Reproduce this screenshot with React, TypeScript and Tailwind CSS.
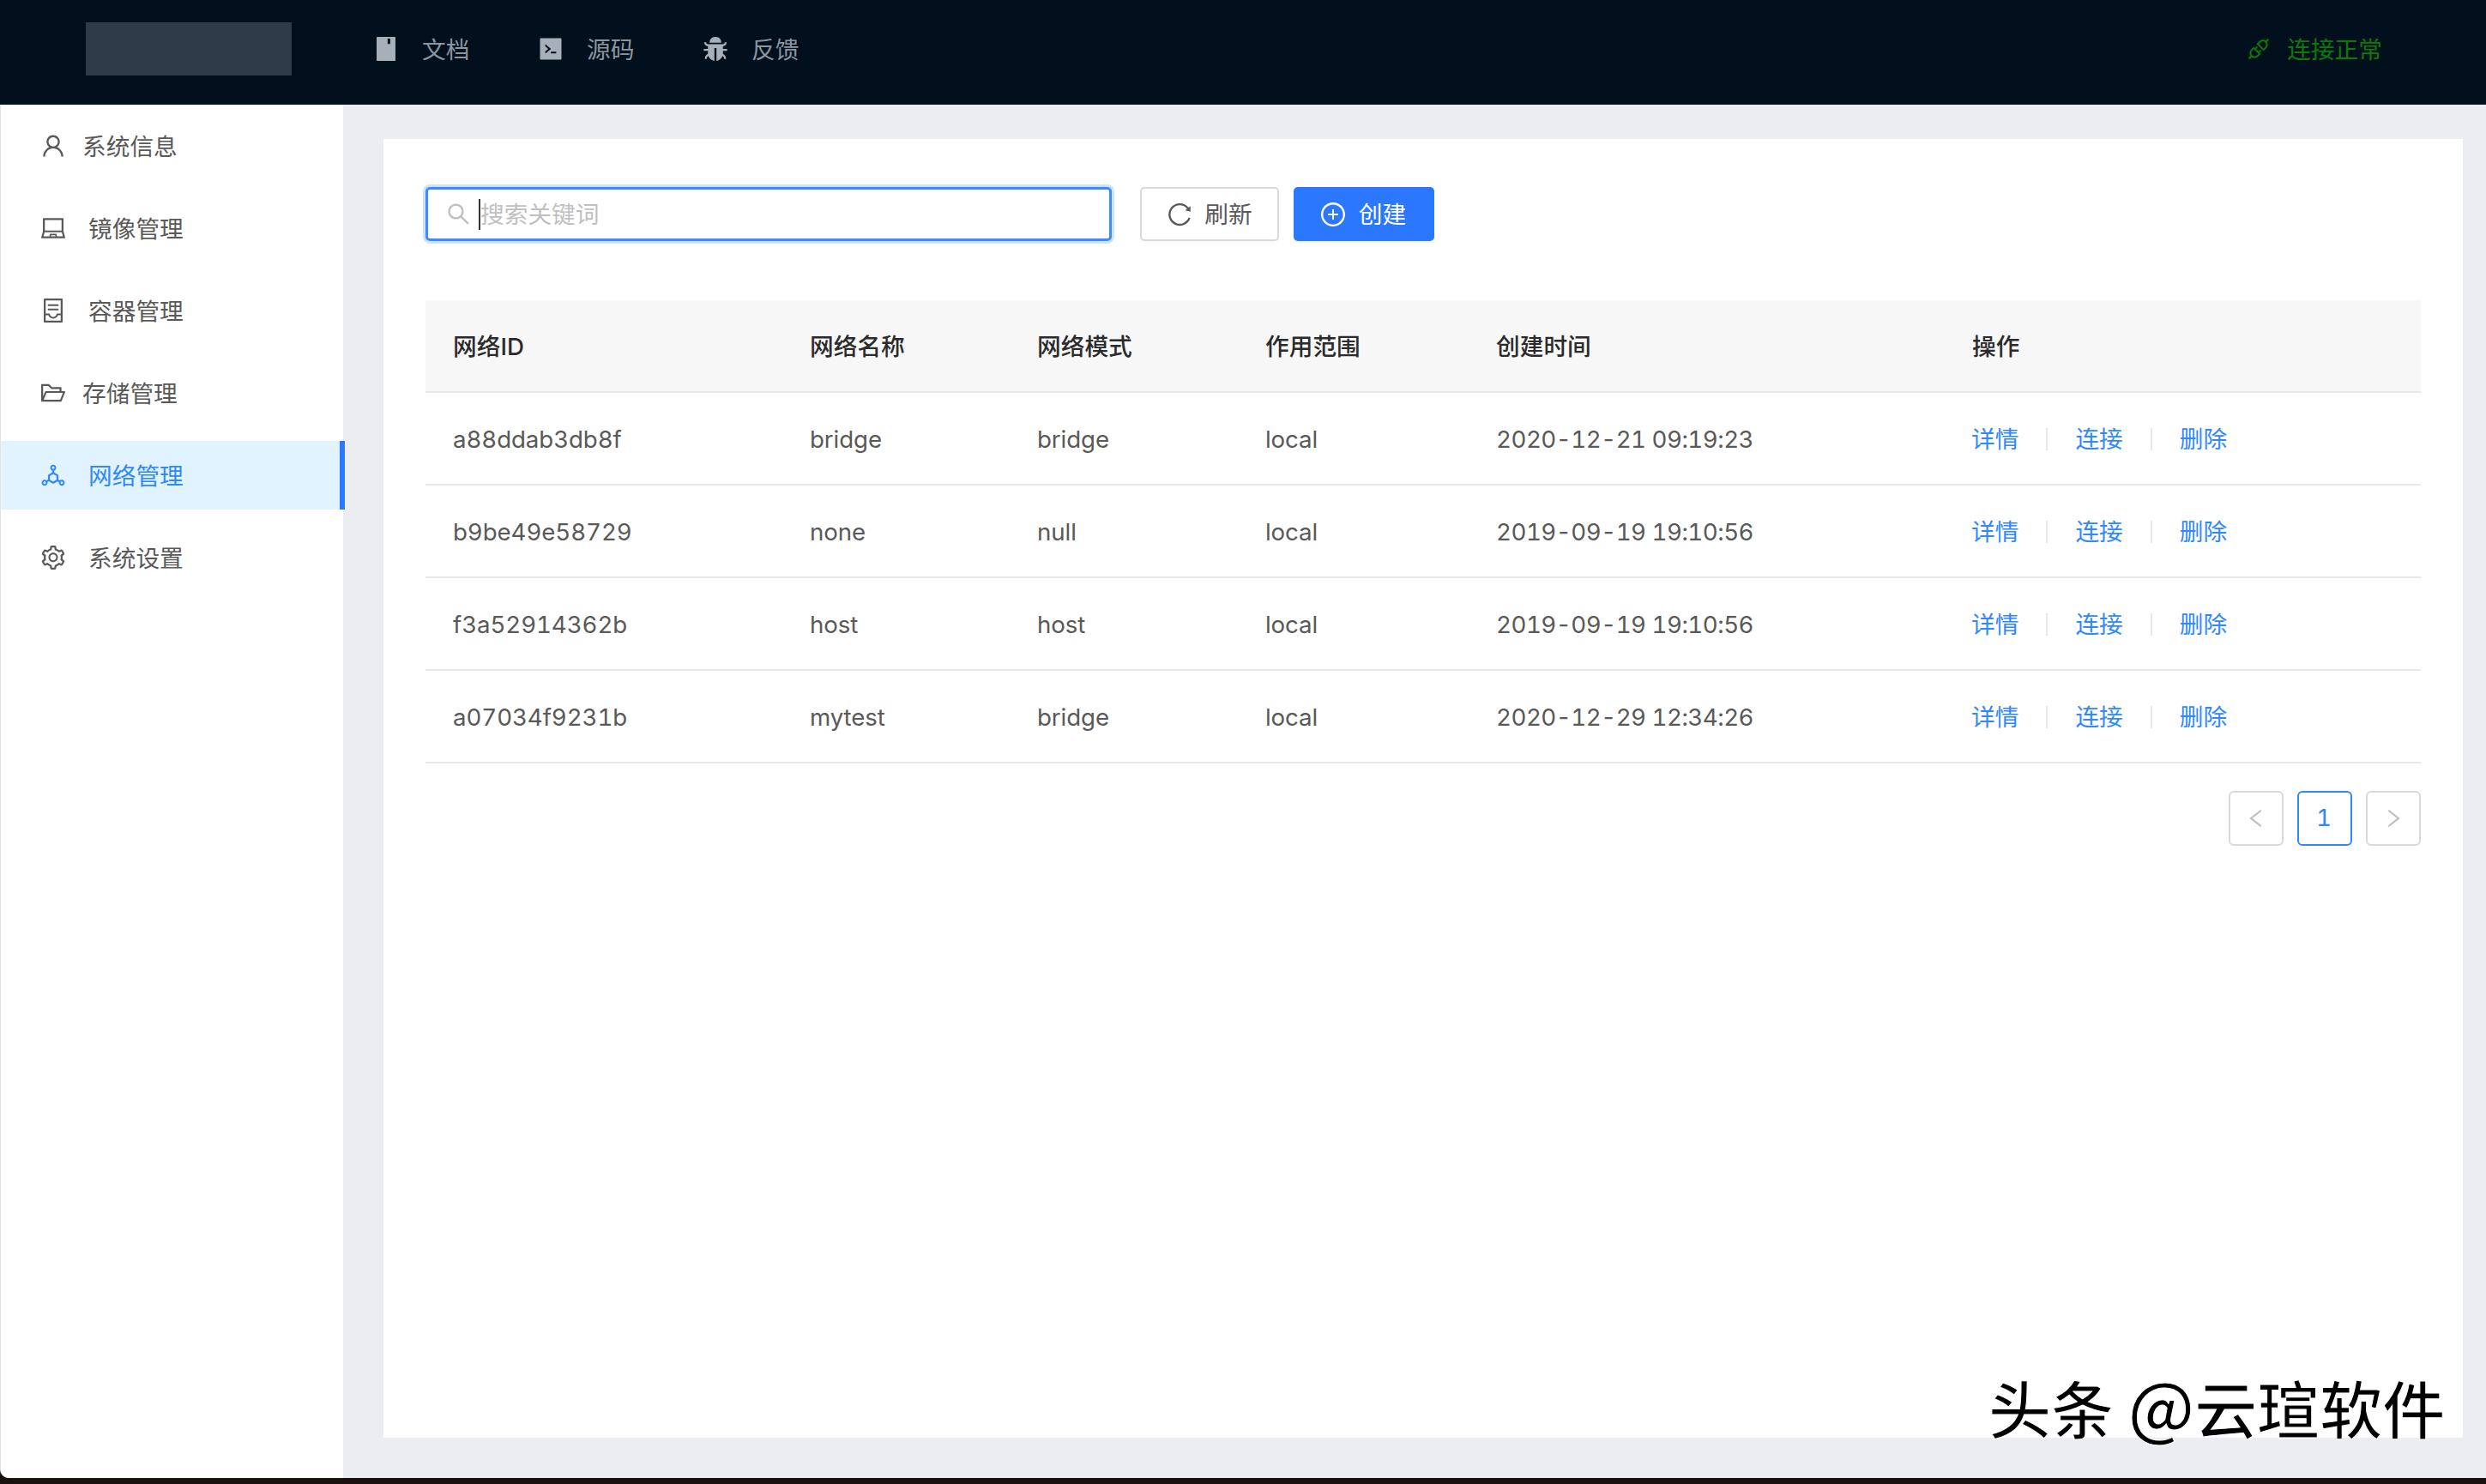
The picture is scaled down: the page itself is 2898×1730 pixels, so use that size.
import React from "react";
import {
  AiFillBook, AiFillBug, AiFillCode, AiOutlineApi, AiOutlineContainer, AiOutlineDeploymentUnit,
  AiOutlineFolderOpen, AiOutlineLaptop, AiOutlineLeft, AiOutlinePlusCircle, AiOutlineReload,
  AiOutlineRight, AiOutlineSearch, AiOutlineSetting, AiOutlineUser,
} from "react-icons/ai";

const nav = [
  { icon: AiFillBook, label: "文档" },
  { icon: AiFillCode, label: "源码" },
  { icon: AiFillBug, label: "反馈" },
];

const menu = [
  { icon: AiOutlineUser, label: "系统信息", gap: "gap-[18px]", active: false },
  { icon: AiOutlineLaptop, label: "镜像管理", gap: "gap-[25px]", active: false },
  { icon: AiOutlineContainer, label: "容器管理", gap: "gap-[25px]", active: false },
  { icon: AiOutlineFolderOpen, label: "存储管理", gap: "gap-[18px]", active: false },
  { icon: AiOutlineDeploymentUnit, label: "网络管理", gap: "gap-[25px]", active: true },
  { icon: AiOutlineSetting, label: "系统设置", gap: "gap-[25px]", active: false },
];

const rows = [
  ["a88ddab3db8f", "bridge", "bridge", "local", "2020-12-21 09:19:23"],
  ["b9be49e58729", "none", "null", "local", "2019-09-19 19:10:56"],
  ["f3a52914362b", "host", "host", "local", "2019-09-19 19:10:56"],
  ["a07034f9231b", "mytest", "bridge", "local", "2020-12-29 12:34:26"],
];

const heads = ["网络ID", "网络名称", "网络模式", "作用范围", "创建时间", "操作"];

export default function App() {
  return (
    <div className="relative flex h-[1730px] w-[2898px] flex-col overflow-hidden bg-[#1a1210] font-['Inter','Noto_Sans_CJK_SC',sans-serif] text-[27.7px] tabular-nums">
      <header className="flex h-[122px] shrink-0 items-center bg-[#02101e] pb-[8px]">
        <div className="ml-[100px] h-[62px] w-[240px] bg-[#2e3b48]" />
        <nav className="ml-[94px] flex items-center gap-[79px] text-[#8b96a1]">
          {nav.map((n) => (
            <div key={n.label} className="flex items-center gap-[26px]">
              <n.icon className="h-[32px] w-[32px] text-[#a7b0b9]" />
              <span className="w-[55px] whitespace-nowrap pt-[3px]">{n.label}</span>
            </div>
          ))}
        </nav>
        <div className="ml-auto mr-[121px] flex items-center gap-[18px] text-[#0b7a0b]">
          <AiOutlineApi className="h-[30px] w-[30px]" />
          <span className="pt-[3px]">连接正常</span>
        </div>
      </header>

      <div className="flex h-[1601px] shrink-0 overflow-hidden rounded-bl-[10px] border-l border-[#e6e2df] bg-[#ebedf1]">
        <aside className="flex w-[399px] shrink-0 flex-col gap-[16px] bg-white pt-[8px]">
          {menu.map((m) => (
            <div
              key={m.label}
              className={
                m.active
                  ? `flex h-[80px] w-[401px] items-center border-r-[6px] border-[#2b78ff] bg-[#e0f3ff] pl-[45px] text-[#2f88ff] ${m.gap}`
                  : `flex h-[80px] items-center pl-[45px] text-[#595959] ${m.gap}`
              }
            >
              <m.icon className="h-[32px] w-[32px] shrink-0" />
              <span className="pt-[3px]">{m.label}</span>
            </div>
          ))}
        </aside>

        <main className="flex-1 pb-[47px] pl-[47px] pr-[28px] pt-[40px]">
          <div className="h-full bg-white px-[49px] pt-[56px]">
            <div className="flex h-[63px] items-center">
              <div className="flex h-[63px] w-[800px] items-center rounded-[5px] border-[3px] border-[#3d8bff] pl-[20px] shadow-[0_0_0_3px_#cbe4ff]">
                <AiOutlineSearch className="h-[31px] w-[31px] shrink-0 text-[#bfbfbf]" />
                <span className="ml-[8px] h-[36px] w-[2px] bg-[#333333]" />
                <span className="pt-[3px] text-[#bfbfbf]">搜索关键词</span>
              </div>
              <button className="ml-[33px] flex h-[63px] w-[162px] items-center justify-center gap-[13px] rounded-[5px] border-2 border-[#d9d9d9] bg-white pr-[1px] text-[#595959] shadow-[0_2px_0_rgba(0,0,0,0.02)]">
                <AiOutlineReload className="h-[32px] w-[32px]" />
                <span className="pt-[3px]">刷新</span>
              </button>
              <button className="ml-[17px] flex h-[63px] w-[164px] items-center justify-center gap-[14px] rounded-[5px] bg-[#2b78ff] pr-[3px] text-white shadow-[0_2px_0_rgba(0,0,0,0.04)]">
                <AiOutlinePlusCircle className="h-[32px] w-[32px]" />
                <span className="pt-[3px]">创建</span>
              </button>
            </div>

            <table className="mt-[69px] w-[2326px] table-fixed border-separate border-spacing-0 text-left">
              <colgroup>
                <col className="w-[416px]" />
                <col className="w-[265px]" />
                <col className="w-[266px]" />
                <col className="w-[269px]" />
                <col className="w-[555px]" />
                <col />
              </colgroup>
              <thead>
                <tr>
                  {heads.map((h) => (
                    <th key={h} className="h-[108px] border-b-2 border-[#e8e8e8] bg-[#f7f7f8] pl-[32px] pt-[3px] font-medium text-[#2b2b2b]">
                      {h}
                    </th>
                  ))}
                </tr>
              </thead>
              <tbody>
                {rows.map((r) => (
                  <tr key={r[0]}>
                    {r.map((c, i) => (
                      <td
                        key={i}
                        className={
                          i === 4
                            ? "h-[108px] border-b-2 border-[#e8e8e8] pl-[32px] pt-[3px] tracking-[-0.5px] text-[#595959]"
                            : "h-[108px] border-b-2 border-[#e8e8e8] pl-[32px] pt-[3px] tracking-[-0.1px] text-[#595959]"
                        }
                      >
                        {c}
                      </td>
                    ))}
                    <td className="h-[108px] border-b-2 border-[#e8e8e8] pl-[31px] pt-[3px] text-[#2f88ff]">
                      <div className="flex items-center">
                        <span>详情</span>
                        <span className="mx-[32px] h-[26px] w-[2px] bg-[#e8e8e8]" />
                        <span>连接</span>
                        <span className="mx-[32px] h-[26px] w-[2px] bg-[#e8e8e8]" />
                        <span>删除</span>
                      </div>
                    </td>
                  </tr>
                ))}
              </tbody>
            </table>

            <div className="mt-[32px] flex w-[2326px] justify-end gap-[16px]">
              <div className="flex h-[64px] w-[64px] items-center justify-center rounded-[6px] border-2 border-[#d9d9d9] text-[#bfbfbf]">
                <AiOutlineLeft className="h-[28px] w-[28px]" />
              </div>
              <div className="flex h-[64px] w-[64px] items-center justify-center rounded-[6px] border-2 border-[#2f88ff] pr-[2px] text-[#2f88ff]">
                1
              </div>
              <div className="flex h-[64px] w-[64px] items-center justify-center rounded-[6px] border-2 border-[#d9d9d9] text-[#bfbfbf]">
                <AiOutlineRight className="h-[28px] w-[28px]" />
              </div>
            </div>
          </div>
        </main>
      </div>

      <div className="absolute left-[2318px] top-[1591px] whitespace-nowrap font-['Noto_Sans_CJK_SC',sans-serif] text-[73px] font-medium leading-[90px] text-black [-webkit-text-stroke:1px_white]">
        头条 <span className="text-[80px]">@</span>云瑄软件
      </div>
    </div>
  );
}
